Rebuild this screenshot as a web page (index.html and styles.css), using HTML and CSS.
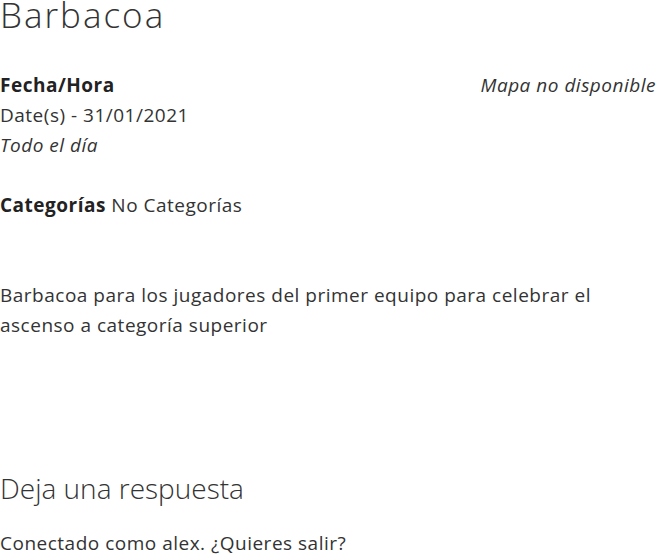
FILE: index.html
```html
<!DOCTYPE html>
<html lang="es">
<head>
<meta charset="utf-8">
<link rel="stylesheet" href="styles.css">
</head>
<body>
<article class="event">
  <h1 class="title">Barbacoa</h1>
  <div class="meta">
    <div class="when">
      <strong>Fecha/Hora</strong><br>
      Date(s) - 31/01/2021<br>
      <i>Todo el día</i>
    </div>
    <div class="map"><i>Mapa no disponible</i></div>
  </div>
  <p class="cats"><strong>Categorías</strong> No Categorías</p>
  <p class="desc">Barbacoa para los jugadores del primer equipo para celebrar el ascenso a categoría superior</p>
  <h3 class="reply">Deja una respuesta</h3>
  <p class="logged">Conectado como alex. ¿Quieres salir?</p>
</article>
</body>
</html>
```
FILE: styles.css
```css
html, body {
  margin: 0;
  padding: 0;
  background: #fff;
}
body {
  font-family: "Open Sans", "Liberation Sans", sans-serif;
  font-size: 19px;
  line-height: 30px;
  letter-spacing: 0.5px;
  color: #333;
}
.title {
  margin: 0;
  font-size: 35px;
  font-weight: 300;
  line-height: 30px;
  padding: 0;
  letter-spacing: 2px;
  color: #333;
}
.meta {
  display: flex;
  justify-content: space-between;
  margin-top: 40px;
}
.meta strong, .cats strong {
  font-weight: 700;
  color: #222;
}
.cats {
  margin: 30px 0 0;
}
.desc {
  margin: 60px 0 0;
}
.reply {
  margin: 130px 0 0;
  font-size: 28px;
  font-weight: 300;
  line-height: 36px;
  letter-spacing: 0;
}
.logged {
  margin: 22px 0 0;
}
```
